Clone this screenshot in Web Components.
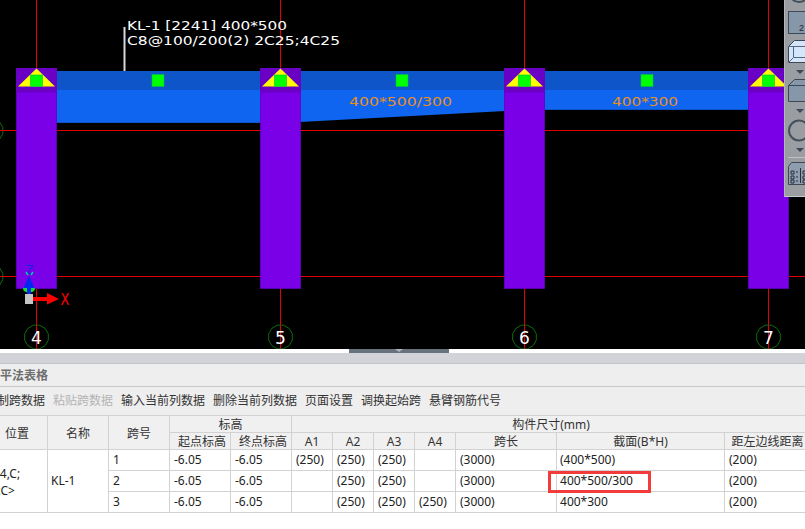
<!DOCTYPE html>
<html lang="zh">
<head>
<meta charset="utf-8">
<title>平法表格</title>
<style>
    html, body { margin: 0; background: #fff; }
    body {
        width: 805px;
        height: 529px;
        overflow: hidden;
        display: flex;
        flex-direction: column;
        font: 12px "Noto Sans", "Noto Sans CJK SC", sans-serif;
    }
</style>
</head>
<body>
    <cad-view>
        <cad-palette></cad-palette>
    </cad-view>
    <pane-grip></pane-grip>
    <panel-title>平法表格</panel-title>
    <panel-tools>
        <tool-item>复制跨数据</tool-item>
        <tool-item disabled>粘贴跨数据</tool-item>
        <tool-item>输入当前列数据</tool-item>
        <tool-item>删除当前列数据</tool-item>
        <tool-item>页面设置</tool-item>
        <tool-item>调换起始跨</tool-item>
        <tool-item>悬臂钢筋代号</tool-item>
    </panel-tools>
    <span-table></span-table>

<script>
(function() {
    "use strict";

    const COLUMNS = [16, 260, 504, 748];
    const AXES = [[36.5, "4"], [280.5, "5"], [524.5, "6"], [768.5, "7"]];
    const MARKS = [152, 396, 641];

    function polygon(cx, cy, r, sides) {
        var points = [];
        for (var i = 0; i < sides; i++) {
            var a = (i + 0.5) * 2 * Math.PI / sides;
            points.push((cx + r * Math.cos(a)).toFixed(1) + "," + (cy + r * Math.sin(a)).toFixed(1));
        }
        return points.join(" ");
    }

    function bubble(cx, cy, label) {
        return `
            <polygon points="${ polygon(cx, cy, 12.2, 12) }" fill="none" stroke="#0a6e0a"/>
            <line x1="${ cx }" y1="${ cy - 12 }" x2="${ cx }" y2="349" stroke="#e00000"/>
            <text x="${ cx }" y="${ cy + 6.5 }" text-anchor="middle" font-size="17" fill="#fff">${ label }</text>
        `;
    }

    function column(x) {
        var c = x + 20.5;
        return `
            <rect x="${ x + 0.4 }" y="68.4" width="40.2" height="220" fill="#7a00e8" stroke="#6200c4" stroke-width="0.8"/>
            <rect x="${ x }" y="68" width="41" height="24.5" fill="#6a00c4"/>
            <polygon points="${ c },68.5 ${ c - 18.5 },86.5 ${ c + 18.5 },86.5" fill="#ffff00"/>
            <rect x="${ c - 6 }" y="75" width="12" height="11.5" fill="#00ff00" stroke="#00c040" stroke-width="0.6"/>
        `;
    }

    var viewTemplate = document.createElement("template");
    viewTemplate.innerHTML = `
        <style>
            :host {
                display: block;
                position: relative;
                flex: none;
                height: 349px;
                background: #000;
                overflow: hidden;
            }

            svg {
                display: block;
                font-family: "DejaVu Sans", sans-serif;
            }

            ::slotted(cad-palette) {
                position: absolute;
                top: 0;
                right: 0;
            }
        </style>
        <svg width="805" height="349" viewBox="0 0 805 349"></svg>
        <slot></slot>
    `;

    class CadView extends HTMLElement {
        constructor() {
            super();
            this._shadow = this.attachShadow({mode: "open"});
            this._shadow.appendChild(viewTemplate.content.cloneNode(true));
            this._shadow.querySelector("svg").innerHTML = this.drawing();
        }

        drawing() {
            var red = AXES.map(function(a) {
                return `<line x1="${ a[0] }" y1="0" x2="${ a[0] }" y2="70" stroke="#e00000"/>
                        <line x1="${ a[0] }" y1="288" x2="${ a[0] }" y2="349" stroke="#e00000"/>`;
            }).join("");

            return `
                <polygon points="${ polygon(-9, 130.5, 12.2, 12) }" fill="none" stroke="#0a6e0a"/>
                <polygon points="${ polygon(-9, 276.5, 12.2, 12) }" fill="none" stroke="#0a6e0a"/>
                <line x1="0" y1="130.5" x2="805" y2="130.5" stroke="#e00000"/>
                <line x1="0" y1="276.5" x2="805" y2="276.5" stroke="#e00000"/>
                ${ red }

                <rect x="56" y="90" width="205" height="33" fill="#0f65f0"/>
                <rect x="56" y="122" width="205" height="1" fill="#0d55c8"/>
                <polygon points="300,90 505,90 505,111 300,122" fill="#0f65f0"/>
                <rect x="544" y="90" width="205" height="20" fill="#0f65f0"/>
                <rect x="544" y="109" width="205" height="1" fill="#0d55c8"/>
                <rect x="56" y="71" width="693" height="19" fill="#0d55c8"/>

                ${ COLUMNS.map(column).join("") }
                ${ MARKS.map(function(x) {
                    return `<rect x="${ x }" y="74.5" width="12" height="12" fill="#00ff00" stroke="#00c040" stroke-width="0.6"/>`;
                }).join("") }

                <line x1="124.5" y1="27" x2="124.5" y2="71" stroke="#d8d8d8" stroke-width="2"/>
                <text x="127" y="30" font-size="13" textLength="160" lengthAdjust="spacingAndGlyphs" fill="#fff">KL-1 [2241] 400*500</text>
                <text x="127" y="45" font-size="13" textLength="213" lengthAdjust="spacingAndGlyphs" fill="#fff">C8@100/200(2) 2C25;4C25</text>
                <text x="349" y="106" font-size="12" textLength="103" lengthAdjust="spacingAndGlyphs" fill="#e8901c">400*500/300</text>
                <text x="612" y="106" font-size="12" textLength="66" lengthAdjust="spacingAndGlyphs" fill="#e8901c">400*300</text>

                ${ AXES.map(function(a) { return bubble(a[0], 337, a[1]); }).join("") }

                <text x="25.5" y="273.5" font-size="13" textLength="8" lengthAdjust="spacingAndGlyphs" fill="#1a20e0">Z</text>
                <path d="M26 272l2 3M33 272l-2 3" stroke="#00d0a0" stroke-width="1.5"/>
                <ellipse cx="29" cy="289" rx="6" ry="3.5" fill="#10e030"/>
                <polygon points="29,276 23.5,288 34.5,288" fill="#0028f0"/>
                <rect x="27" y="286" width="4" height="11" fill="#0028f0"/>
                <rect x="25" y="294" width="8" height="10" fill="#c4c4c4"/>
                <rect x="33" y="297" width="15" height="4" fill="#ff0000"/>
                <polygon points="47,293 59,299 47,304.5" fill="#ff0000"/>
                <text x="60.5" y="305" font-size="16" textLength="9" lengthAdjust="spacingAndGlyphs" fill="#ff0000">X</text>
            `;
        }
    }

    var paletteTemplate = document.createElement("template");
    paletteTemplate.innerHTML = `
        <style>
            :host {
                display: block;
                width: 21px;
                height: 197px;
                background: #9a9ea3;
                box-shadow: inset 1px 0 #b4b7ba, inset 0 -1px #c8cacc;
            }

            svg {
                display: block;
            }
        </style>
        <svg width="21" height="197" viewBox="0 0 21 197">
            <circle cx="15" cy="-8" r="10" fill="none" stroke="#44505c" stroke-width="2"/>
            <rect x="4.5" y="11.5" width="21" height="22" fill="#8797aa" stroke="#3c4858"/>
            <text x="15" y="31" font-family="Liberation Sans, sans-serif" font-size="9" fill="#1e2630">2</text>

            <path d="M4.5 46.5L10.5 40.5H25V62.5H4.5Z" fill="#d4e6fc" stroke="#3c4858"/>
            <path d="M4.5 46.5H25M9.5 46.5V57.5M9.5 57.5H25M9.5 57.5L4.5 62.5" fill="none" stroke="#56687c"/>
            <polygon points="12,70 20,70 16,74" fill="#3c4858"/>

            <path d="M4.5 85.5L10.5 79.5H25V101.5H4.5Z" fill="#8797aa" stroke="#3c4858"/>
            <path d="M4.5 85.5H25" stroke="#3c4858"/>
            <polygon points="12,109 20,109 16,113" fill="#3c4858"/>

            <circle cx="15" cy="130.5" r="10" fill="none" stroke="#44505c" stroke-width="2"/>
            <polygon points="12,148 20,148 16,152" fill="#3c4858"/>

            <line x1="4" y1="157.5" x2="21" y2="157.5" stroke="#c0c2c4"/>

            <path d="M4.5 166.5L7.5 162.5H25V184.5H4.5Z" fill="#8f9dae" stroke="#3c4858"/>
            <path d="M7 171h3v3h-3zM7 176h3v3h-3zM7 180h3v3h-3zM12 172h2M12 177h2M12 181h2M16.5 168v15M19 171h3v3h-3zM19 176h3v3h-3zM19 180h3v3h-3z" fill="none" stroke="#27313e"/>
        </svg>
    `;

    class CadPalette extends HTMLElement {
        constructor() {
            super();
            this.attachShadow({mode: "open"}).appendChild(paletteTemplate.content.cloneNode(true));
        }
    }

    class PaneGrip extends HTMLElement {
        constructor() {
            super();
            this.attachShadow({mode: "open"}).innerHTML = `
                <style>
                    :host {
                        display: block;
                        flex: none;
                        height: 15px;
                        background: linear-gradient(#fff 0 4px, #d2d3d8 4px);
                        border-bottom: 1px solid #c2c3c8;
                        box-sizing: border-box;
                    }
                    div {
                        width: 100px;
                        height: 4px;
                        margin-left: 349px;
                        background: #68727c;
                        display: flex;
                        justify-content: center;
                    }
                    i {
                        width: 0;
                        height: 0;
                        border: 4px solid transparent;
                        border-top: 3px solid #b0b6bc;
                        border-bottom: 0;
                    }
                </style>
                <div><i></i></div>
            `;
        }
    }

    class PanelTitle extends HTMLElement {
        constructor() {
            super();
            this.attachShadow({mode: "open"}).innerHTML = `
                <style>
                    :host {
                        display: flex;
                        align-items: center;
                        flex: none;
                        height: 23px;
                        box-sizing: border-box;
                        background: #eeeeee;
                        border-bottom: 1px solid #c8c8c8;
                        color: #6e6e6e;
                        font-weight: bold;
                        font-size: 12px;
                    }
                </style>
                <slot></slot>
            `;
        }
    }

    class PanelTools extends HTMLElement {
        constructor() {
            super();
            this.attachShadow({mode: "open"}).innerHTML = `
                <style>
                    :host {
                        display: flex;
                        align-items: center;
                        flex: none;
                        height: 28px;
                        box-sizing: border-box;
                        background: #eeeeee;
                        overflow: hidden;
                    }
                    div {
                        display: flex;
                        gap: 8px;
                        margin-left: -15px;
                        white-space: nowrap;
                    }
                </style>
                <div><slot></slot></div>
            `;
        }
    }

    class ToolItem extends HTMLElement {
        constructor() {
            super();
            this.attachShadow({mode: "open"}).innerHTML = `
                <style>
                    :host {
                        display: block;
                        color: #333;
                        font-size: 12px;
                        line-height: 16px;
                    }
                    :host([disabled]) {
                        color: #b4b4b4;
                    }
                </style>
                <slot></slot>
            `;
        }
    }

    const ROWS = [
        ["1", "(250)", "(250)", "(250)", "", "(400*500)"],
        ["2", "", "(250)", "(250)", "", "400*500/300"],
        ["3", "", "(250)", "(250)", "(250)", "400*300"]
    ];

    var tableTemplate = document.createElement("template");
    tableTemplate.innerHTML = `
        <style>
            :host {
                display: block;
                flex: 1;
                overflow: hidden;
                background: #fff;
            }

            table {
                table-layout: fixed;
                width: 824px;
                margin-left: -14px;
                border-collapse: collapse;
                color: #222;
                font-size: 12px;
            }

            th, td {
                border: 1px solid #d2d2d2;
                padding: 0 0 0 4px;
                overflow: hidden;
                white-space: nowrap;
                font-weight: normal;
                box-sizing: border-box;
                line-height: 16px;
            }

            th {
                background: #f0f0f0;
                text-align: center;
                padding: 1px 0 0;
                color: #333;
                line-height: 15px;
                height: 17px;
            }

            th.level { padding-left: 4px; }
            tbody td { height: 21px; }

            td.name { padding-left: 3px; }
            td.pos { padding: 1px 0 0 6px; line-height: 17px; }
            td.pos span { margin-left: -2px; }
            td.section { position: relative; overflow: visible; padding-left: 3px; }

            .mark {
                position: absolute;
                left: -9px;
                top: 0;
                width: 103px;
                height: 22px;
                box-sizing: border-box;
                border: 3px solid #f23c3c;
            }
        </style>
        <table>
            <colgroup>
                <col style="width:61px"><col style="width:61px"><col style="width:61px">
                <col style="width:61px"><col style="width:61px"><col style="width:41px">
                <col style="width:41px"><col style="width:41px"><col style="width:41px">
                <col style="width:101px"><col style="width:168px"><col style="width:86px">
            </colgroup>
            <thead>
                <tr>
                    <th rowspan="2">位置</th>
                    <th rowspan="2">名称</th>
                    <th rowspan="2">跨号</th>
                    <th colspan="2">标高</th>
                    <th colspan="7">构件尺寸(mm)</th>
                </tr>
                <tr>
                    <th class="level">起点标高</th><th class="level">终点标高</th>
                    <th>A1</th><th>A2</th><th>A3</th><th>A4</th>
                    <th>跨长</th><th>截面(B*H)</th><th>距左边线距离</th>
                </tr>
            </thead>
            <tbody></tbody>
        </table>
    `;

    class SpanTable extends HTMLElement {
        constructor() {
            super();
            this._shadow = this.attachShadow({mode: "open"});
            this._shadow.appendChild(tableTemplate.content.cloneNode(true));
            this._shadow.querySelector("tbody").innerHTML = ROWS.map(this.row).join("");
        }

        row(item, i) {
            var lead = i ? "" : `
                <td class="pos" rowspan="3">&lt;4,C;<br><span>7,C&gt;</span></td>
                <td class="name" rowspan="3">KL-1</td>
            `;
            var mark = item[0] === "2" ? `<span class="mark"></span>` : "";
            return `
                <tr>
                    ${ lead }
                    <td>${ item[0] }</td>
                    <td>-6.05</td>
                    <td>-6.05</td>
                    <td>${ item[1] }</td>
                    <td>${ item[2] }</td>
                    <td>${ item[3] }</td>
                    <td>${ item[4] }</td>
                    <td>(3000)</td>
                    <td class="section">${ mark }${ item[5] }</td>
                    <td>(200)</td>
                </tr>
            `;
        }
    }

    customElements.define("cad-view", CadView);
    customElements.define("cad-palette", CadPalette);
    customElements.define("pane-grip", PaneGrip);
    customElements.define("panel-title", PanelTitle);
    customElements.define("panel-tools", PanelTools);
    customElements.define("tool-item", ToolItem);
    customElements.define("span-table", SpanTable);

}) ();
</script>
</body>
</html>
